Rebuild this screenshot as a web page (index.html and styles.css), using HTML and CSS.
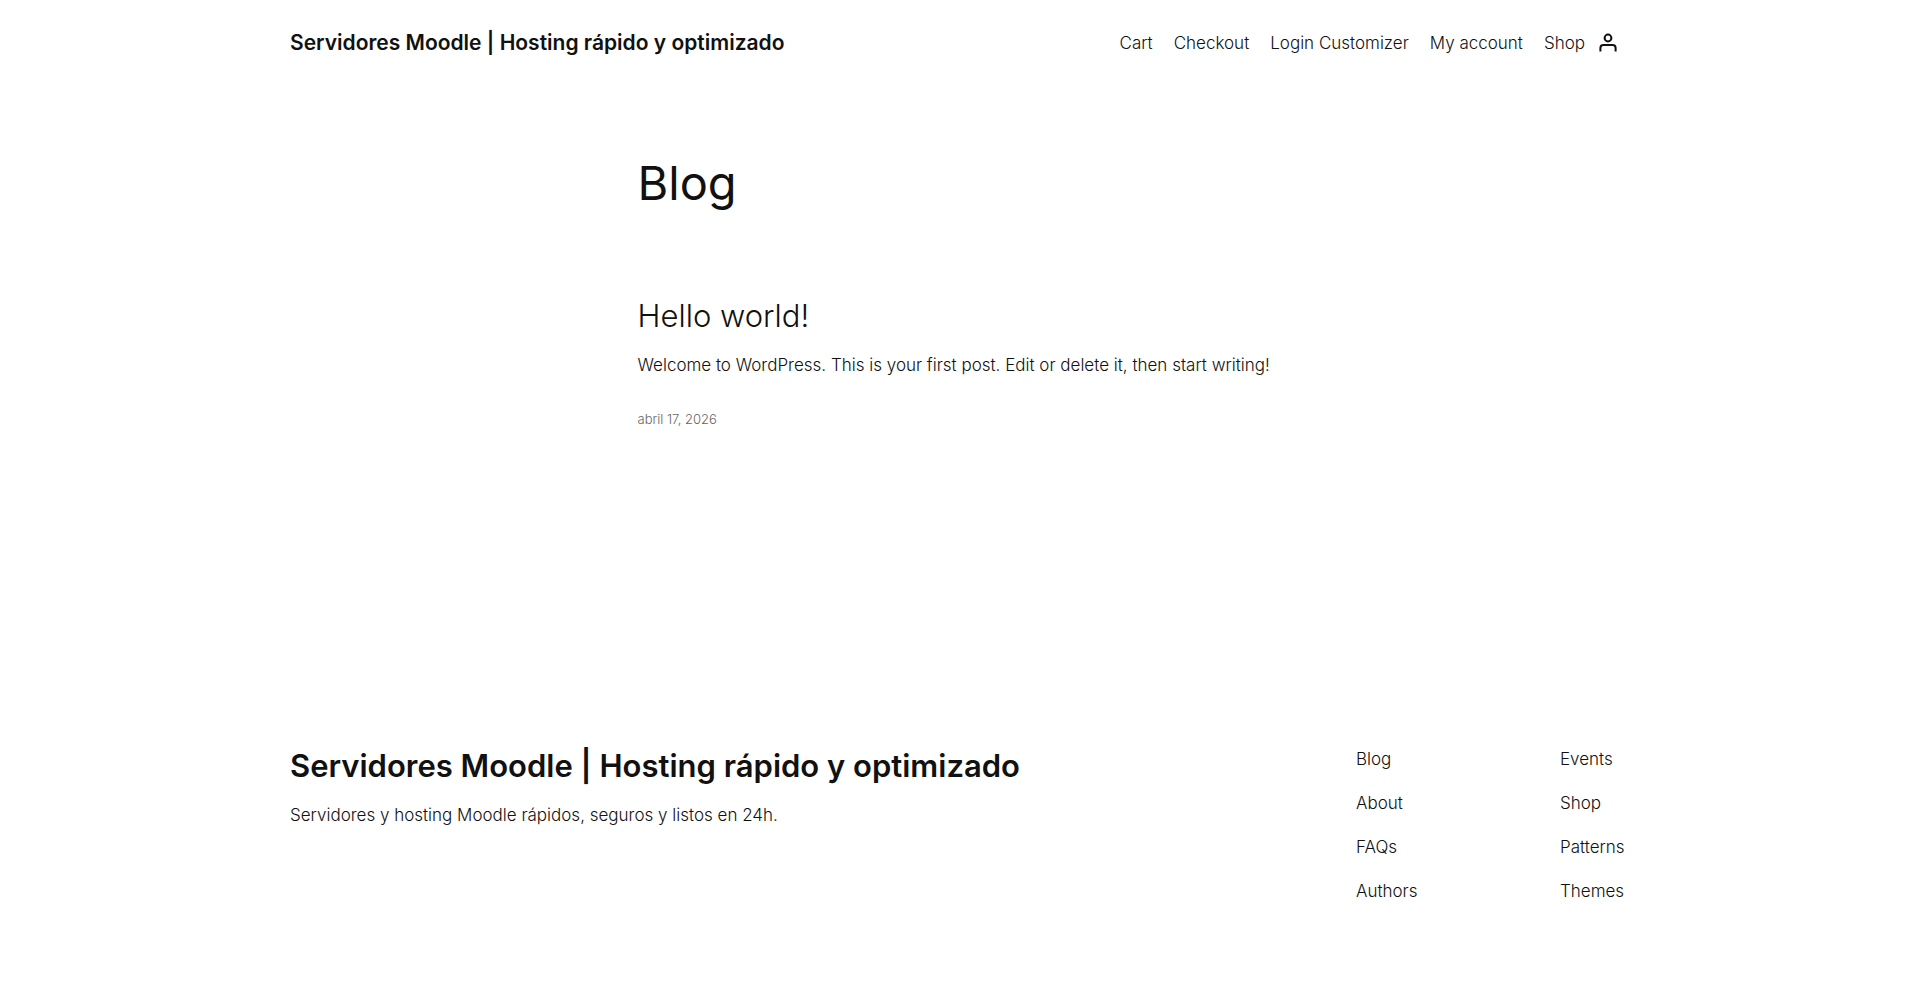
FILE: index.html
```
<!DOCTYPE html>
<html lang="es">
<head>
  <meta charset="UTF-8" />
  <meta name="viewport" content="width=device-width, initial-scale=1.0" />
  <title>Blog - Servidores Moodle | Hosting rápido y optimizado</title>
  <link rel="stylesheet" href="styles.css">
</head>
<body>
  <header class="site-header">
    <div class="wide header-row">
      <p class="site-title"><a href="#">Servidores Moodle | Hosting rápido y optimizado</a></p>
      <div class="header-actions">
        <nav class="main-nav" aria-label="Principal">
          <a href="#">Cart</a>
          <a href="#">Checkout</a>
          <a href="#">Login Customizer</a>
          <a href="#">My account</a>
          <a href="#">Shop</a>
        </nav>
        <a class="account-link" href="#" aria-label="My account">
          <svg class="account-icon" viewBox="0 0 18 20">
            <circle cx="9" cy="5" r="3.4" />
            <path d="M1.4 18.6 V15 Q1.4 12 4.4 12 H13.6 Q16.6 12 16.6 15 V18.6" />
          </svg>
        </a>
      </div>
    </div>
  </header>

  <main class="content">
    <h1>Blog</h1>
    <article class="post">
      <h2><a href="#">Hello world!</a></h2>
      <p class="excerpt">Welcome to WordPress. This is your first post. Edit or delete it, then start writing!</p>
      <a class="post-date" href="#"><time datetime="2026-04-17">abril 17, 2026</time></a>
    </article>
  </main>

  <footer class="site-footer">
    <div class="wide footer-row">
      <div class="footer-brand">
        <h2><a href="#">Servidores Moodle | Hosting rápido y optimizado</a></h2>
        <p>Servidores y hosting Moodle rápidos, seguros y listos en 24h.</p>
      </div>
      <div class="footer-links">
        <nav aria-label="Sitio">
          <a href="#">Blog</a>
          <a href="#">About</a>
          <a href="#">FAQs</a>
          <a href="#">Authors</a>
        </nav>
        <nav aria-label="Más">
          <a href="#">Events</a>
          <a href="#">Shop</a>
          <a href="#">Patterns</a>
          <a href="#">Themes</a>
        </nav>
      </div>
    </div>
  </footer>
</body>
</html>
```

FILE: styles.css
```
* {
  margin: 0;
  padding: 0;
  box-sizing: border-box;
}

body {
  background: #fff;
  color: #111;
  font-family: Inter, "Open Sans", sans-serif;
  font-size: 17px;
  font-weight: 300;
  line-height: 24px;
}

a {
  color: inherit;
  text-decoration: none;
}

a:hover {
  text-decoration: underline;
}

.wide {
  width: 100%;
  max-width: 1340px;
  margin: 0 auto;
}

/* Header */
.site-header {
  padding: 29px 32px 28px;
}

.header-row {
  display: flex;
  flex-wrap: wrap;
  justify-content: space-between;
  align-items: center;
}

.site-title {
  font-size: 21px;
  font-weight: 600;
  line-height: 28px;
}

.header-actions {
  display: flex;
  align-items: center;
  gap: 14px;
  padding-right: 13px;
}

.main-nav {
  display: flex;
  flex-wrap: wrap;
  gap: 21px;
}

.account-link {
  display: flex;
}

.account-icon {
  width: 18px;
  height: 20px;
  fill: none;
  stroke: #111;
  stroke-width: 2;
}

/* Posts */
.content {
  width: 100%;
  max-width: 645px;
  margin: 0 auto;
  padding: 70px 0 240px;
}

h1 {
  margin-bottom: 86px;
  font-size: 47px;
  font-weight: 400;
  line-height: 56px;
}

.post h2 {
  margin-bottom: 18px;
  font-size: 31px;
  font-weight: 300;
  line-height: 38px;
}

.excerpt {
  margin-bottom: 32px;
}

.post-date {
  display: block;
  color: #666;
  font-size: 13px;
  line-height: 20px;
}

/* Footer */
.site-footer {
  padding: 78px 32px;
}

.footer-row {
  display: flex;
  flex-wrap: wrap;
  justify-content: space-between;
}

.footer-brand h2 {
  margin-bottom: 18px;
  font-size: 31px;
  font-weight: 600;
  line-height: 38px;
}

.footer-links {
  display: grid;
  grid-template-columns: 204px 70px;
}

.footer-links nav {
  display: flex;
  flex-direction: column;
  gap: 20px;
}
```
